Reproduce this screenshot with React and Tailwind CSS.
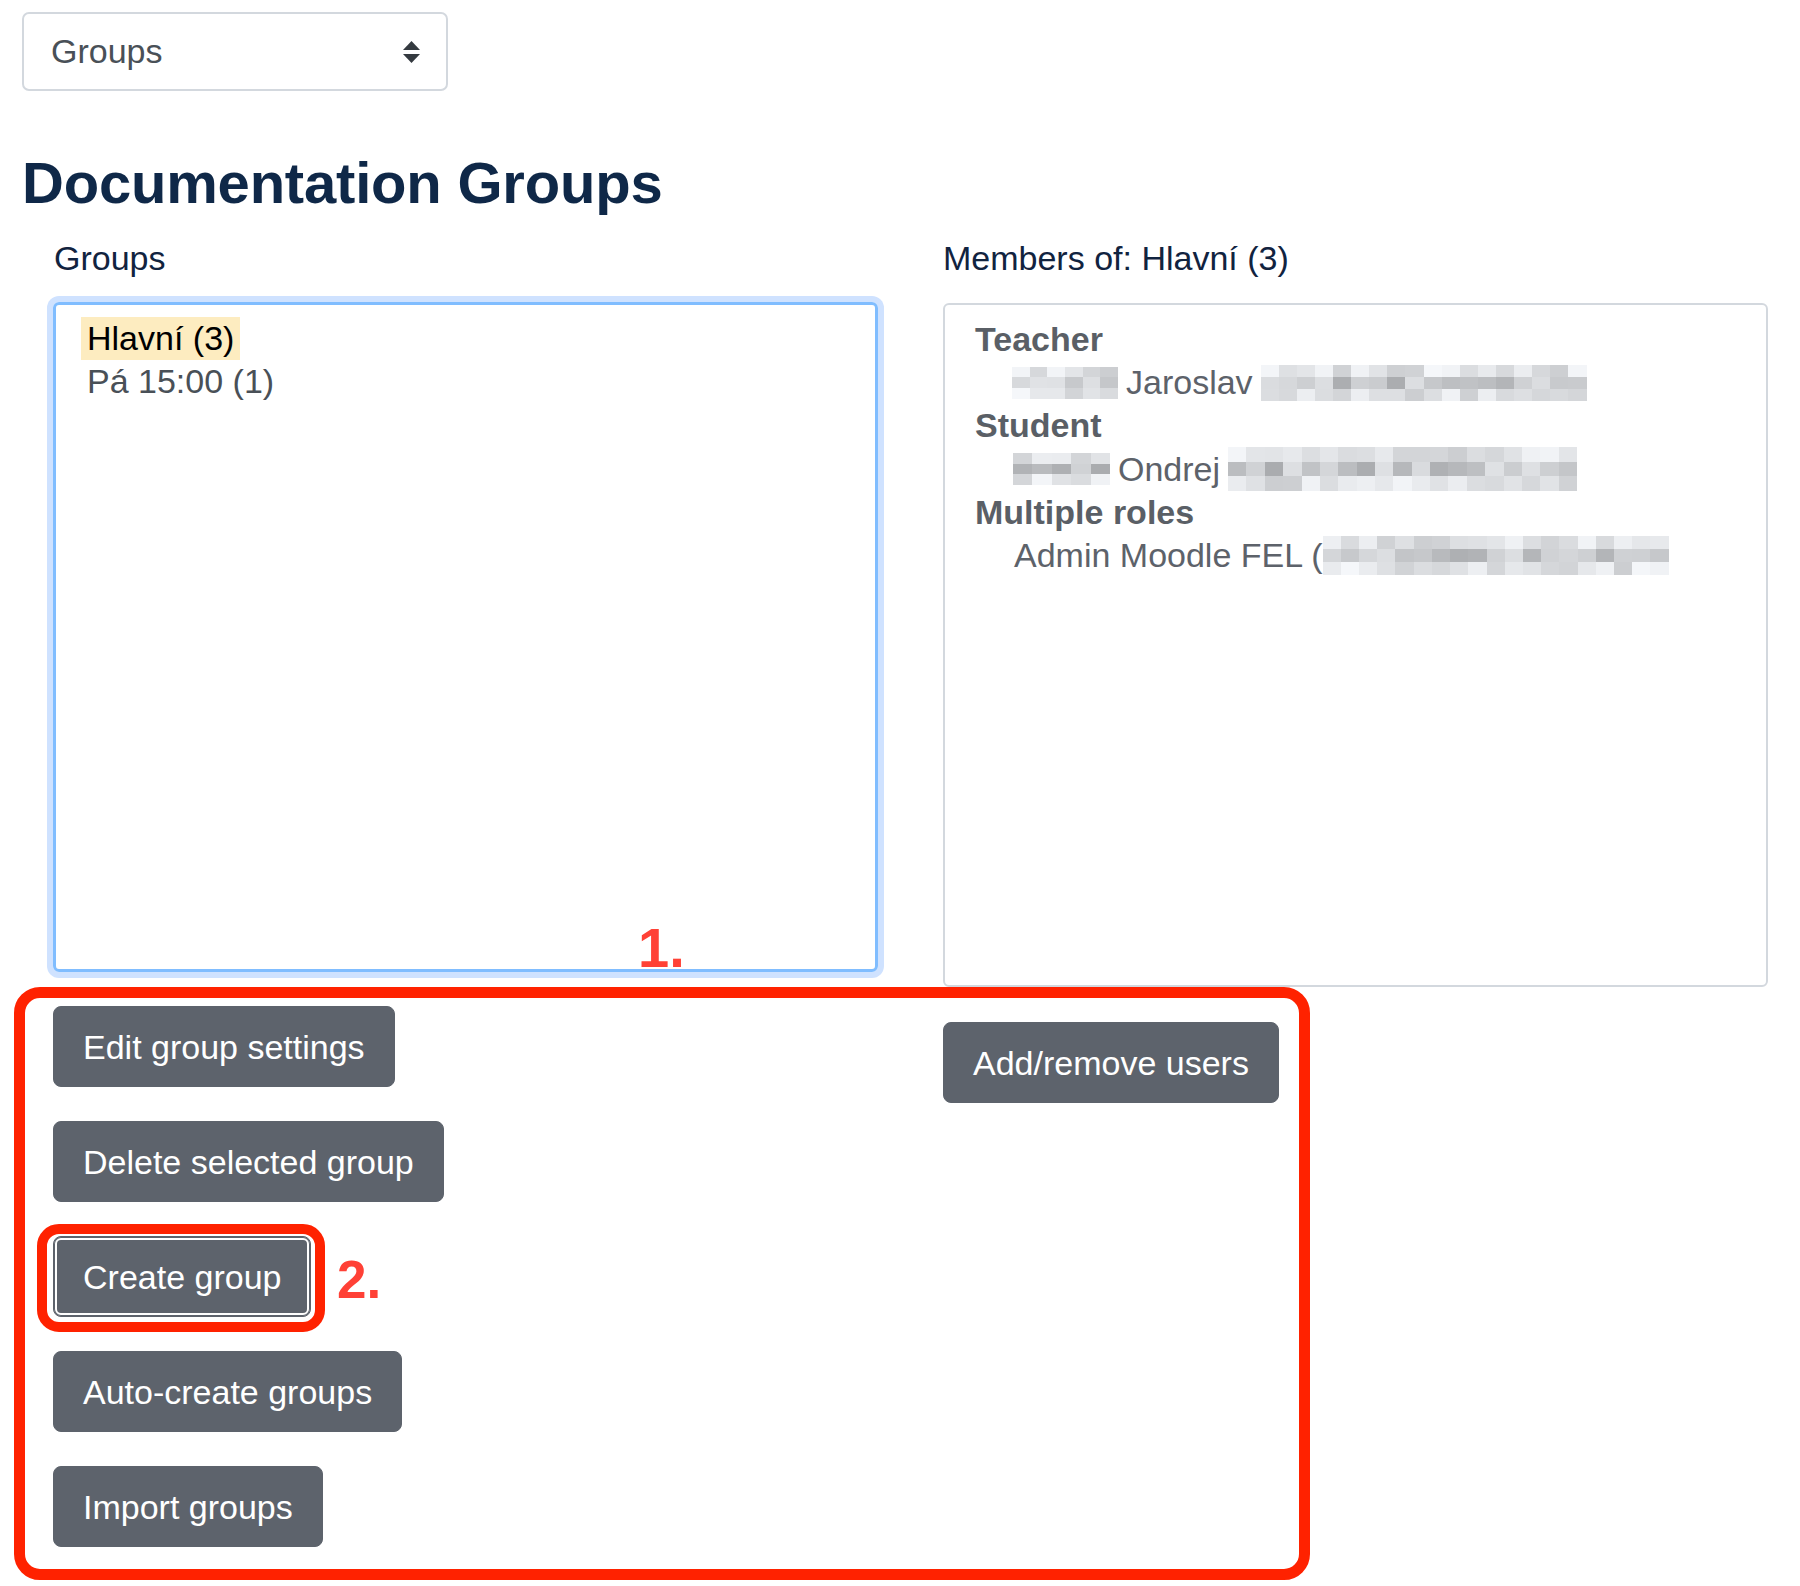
import { useState } from "react";

const shade = (seed, i, light) => {
  const x = Math.sin(seed * 97.13 + i * 12.9898) * 43758.5453;
  const r = x - Math.floor(x);
  const v = Math.round((light ? 205 : 172) + r * (light ? 42 : 55));
  return `rgb(${v - 2},${v},${v + 3})`;
};

// pixelated placeholder used for the blurred-out names / emails
function Blur({ width, height, seed }) {
  const cols = Math.max(1, Math.round(width / 18));
  const rows = 3;
  const cells = [];
  for (let r = 0; r < rows; r++) {
    for (let c = 0; c < cols; c++) {
      const i = r * cols + c;
      cells.push(<div key={i} style={{ backgroundColor: shade(seed, i, r !== 1) }} />);
    }
  }
  return (
    <span
      className="inline-grid align-middle"
      style={{ width, height, gridTemplateColumns: `repeat(${cols}, 1fr)`, gridTemplateRows: `repeat(${rows}, 1fr)` }}
    >
      {cells}
    </span>
  );
}

function Btn({ children, focused }) {
  return (
    <button
      type="button"
      className={`h-[81px] px-[29px] rounded-[8px] bg-[#5d636c] text-white text-[34px] leading-none border border-[#5d636c] ${
        focused ? "shadow-[inset_0_0_0_1px_#5d636c,inset_0_0_0_3px_#ffffff]" : ""
      }`}
    >
      {children}
    </button>
  );
}

export default function App() {
  const [selected, setSelected] = useState(0);
  const groups = ["Hlavní (3)", "Pá 15:00 (1)"];

  return (
    <div className="relative min-h-[1586px] bg-white pl-[22px] pt-[12px] font-['Liberation_Sans',Arial,sans-serif]">
      {/* Groups / overview select */}
      <div className="flex items-center justify-between w-[426px] h-[79px] border-2 border-[#d3d8de] rounded-[7px] pl-[27px] pr-[26px] text-[34px] text-[#495057]">
        <span>Groups</span>
        <svg width="17" height="22" viewBox="0 0 17 22">
          <path d="M8.5 0 L17 9 L0 9 Z" fill="#343a40" />
          <path d="M0 13 L17 13 L8.5 22 Z" fill="#343a40" />
        </svg>
      </div>

      <h2 className="mt-[57px] text-[58px] leading-[70px] font-bold text-[#0f2848] tracking-[-0.2px]">
        Documentation Groups
      </h2>

      <div className="flex pl-[31px] mt-[19px]">
        {/* left column */}
        <div className="w-[825px]">
          <div className="text-[34px] leading-[43px] text-[#11233f] pl-[1px]">Groups</div>
          <div className="mt-[22px] h-[670px] border-[3px] border-[#80bdff] rounded-[6px] shadow-[0_0_0_6px_#cfe2ff] pt-[12px] pl-[25px]">
            {groups.map((g, i) => (
              <div key={g} onClick={() => setSelected(i)} className="flex">
                <span
                  className={`px-[6px] text-[34px] leading-[43px] ${
                    selected === i ? "bg-[#fdecc0] text-black" : "text-[#495057]"
                  }`}
                >
                  {g}
                </span>
              </div>
            ))}
          </div>
          <div className="mt-[34px] flex flex-col items-start gap-[34px]">
            <Btn>Edit group settings</Btn>
            <Btn>Delete selected group</Btn>
            <Btn focused>Create group</Btn>
            <Btn>Auto-create groups</Btn>
            <Btn>Import groups</Btn>
          </div>
        </div>

        {/* right column */}
        <div className="ml-[65px] w-[825px]">
          <div className="text-[34px] leading-[43px] text-[#11233f]">Members of: Hlavní (3)</div>
          <div className="mt-[23px] h-[684px] border-2 border-[#d3d8de] rounded-[6px] pt-[13px] pl-[30px] text-[34px] leading-[43px]">
            <div className="font-bold text-[#5a5f66]">Teacher</div>
            <div className="flex items-center gap-[8px] pl-[37px] text-[#5d626a]">
              <Blur width={106} height={32} seed={1} />
              <span>Jaroslav</span>
              <Blur width={326} height={36} seed={2} />
            </div>
            <div className="font-bold text-[#5a5f66]">Student</div>
            <div className="flex items-center gap-[8px] pl-[38px] text-[#5d626a]">
              <Blur width={97} height={32} seed={4} />
              <span>Ondrej</span>
              <Blur width={349} height={44} seed={5} />
            </div>
            <div className="font-bold text-[#5a5f66]">Multiple roles</div>
            <div className="flex items-center pl-[39px] text-[#5d626a]">
              <span>Admin Moodle FEL (</span>
              <Blur width={346} height={40} seed={7} />
            </div>
          </div>
          <div className="mt-[35px]">
            <Btn>Add/remove users</Btn>
          </div>
        </div>
      </div>

      {/* annotations */}
      <div className="absolute left-[14px] top-[987px] w-[1296px] h-[593px] border-[11px] border-[#ff2200] rounded-[26px] pointer-events-none" />
      <div className="absolute left-[37px] top-[1224px] w-[288px] h-[108px] border-[10px] border-[#ff2200] rounded-[22px] pointer-events-none" />
      <div className="absolute left-[638px] top-[918px] text-[56px] leading-[60px] font-bold text-[#ff4136]">1.</div>
      <div className="absolute left-[337px] top-[1251px] text-[53px] leading-[58px] font-bold text-[#ff4136]">2.</div>
    </div>
  );
}
